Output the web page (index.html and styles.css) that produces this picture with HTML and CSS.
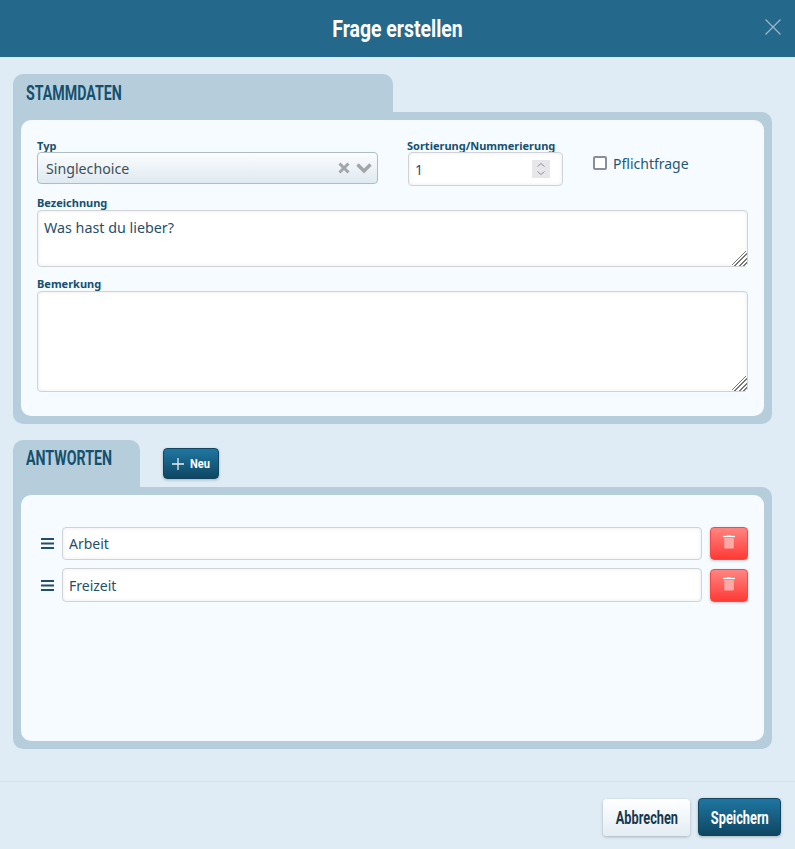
FILE: index.html
```html
<!DOCTYPE html>
<html lang="de">
<head>
<meta charset="utf-8">
<title>Frage erstellen</title>
<link rel="stylesheet" href="styles.css">
</head>
<body>
<div class="modal">
  <header class="modal-header">
    <h1 class="modal-title">Frage erstellen</h1>
    <button class="close" aria-label="Schließen">
      <svg width="16" height="16" viewBox="0 0 16 16"><path d="M.5.5l15 15M15.5.5l-15 15" stroke="#9db9c9" stroke-width="1.2" fill="none"/></svg>
    </button>
  </header>
  <main class="modal-body">
    <section class="section section-master">
      <div class="tab-row">
        <h2 class="tab tab-master"><span class="tab-text">STAMMDATEN</span></h2>
      </div>
      <div class="panel">
        <div class="card card-master">
          <div class="top-row">
            <div class="field field-type">
              <label class="label">Typ</label>
              <div class="select">
                <span class="select-value">Singlechoice</span>
                <svg class="select-x" width="12" height="12" viewBox="0 0 12 12"><path d="M1.500 1.500l9 9M10.500 1.500l-9 9" stroke="#a3a6a9" stroke-width="3" fill="none"/></svg>
                <svg class="select-chevron" width="16" height="12" viewBox="0 0 16 12"><path d="M1.500 2.500L8 9l6.500-6.500" stroke="#a3a6a9" stroke-width="3.400" fill="none"/></svg>
              </div>
            </div>
            <div class="field field-order">
              <label class="label">Sortierung/Nummerierung</label>
              <div class="number">
                <input class="number-input" type="text" value="1">
                <span class="spinner">
                  <svg width="18" height="18" viewBox="0 0 18 18"><path d="M5.500 6.500L9 3.500l3.500 3M5.500 11.500L9 14.500l3.500-3" stroke="#8d9197" stroke-width="1" fill="none"/></svg>
                </span>
              </div>
            </div>
            <label class="check"><span class="check-box"></span><span class="check-text">Pflichtfrage</span></label>
          </div>
          <div class="field field-name">
            <label class="label">Bezeichnung</label>
            <textarea class="area area-name">Was hast du lieber?</textarea>
          </div>
          <div class="field field-note">
            <label class="label">Bemerkung</label>
            <textarea class="area area-note"></textarea>
          </div>
        </div>
      </div>
    </section>

    <section class="section section-answers">
      <div class="tab-row">
        <h2 class="tab tab-answers"><span class="tab-text">ANTWORTEN</span></h2>
        <button class="btn-new">
          <svg width="12" height="12" viewBox="0 0 12 12"><path d="M6 0v12M0 6h12" stroke="#e6eff4" stroke-width="1.300" fill="none"/></svg>
          <span class="new-text">Neu</span>
        </button>
      </div>
      <div class="panel">
        <div class="card card-answers">
          <div class="answer answer-first">
            <svg class="handle" width="13" height="11" viewBox="0 0 13 11"><path d="M0 1h13M0 5.500h13M0 10h13" stroke="#1f4f6b" stroke-width="2" fill="none"/></svg>
            <input class="answer-input" type="text" value="Arbeit">
            <button class="btn-delete" aria-label="Löschen">
              <svg width="12" height="14" viewBox="0 0 12 14"><path d="M0 1.500h12" stroke="#fff" stroke-width="1.300"/><path d="M4 1V.3h4V1" fill="#fff"/><path d="M1.200 3h9.600v9.500a1 1 0 0 1-1 1H2.200a1 1 0 0 1-1-1z" fill="#ffa9a7"/></svg>
            </button>
          </div>
          <div class="answer answer-second">
            <svg class="handle" width="13" height="11" viewBox="0 0 13 11"><path d="M0 1h13M0 5.500h13M0 10h13" stroke="#1f4f6b" stroke-width="2" fill="none"/></svg>
            <input class="answer-input" type="text" value="Freizeit">
            <button class="btn-delete" aria-label="Löschen">
              <svg width="12" height="14" viewBox="0 0 12 14"><path d="M0 1.500h12" stroke="#fff" stroke-width="1.300"/><path d="M4 1V.3h4V1" fill="#fff"/><path d="M1.200 3h9.600v9.500a1 1 0 0 1-1 1H2.200a1 1 0 0 1-1-1z" fill="#ffa9a7"/></svg>
            </button>
          </div>
        </div>
      </div>
    </section>
  </main>
  <footer class="modal-footer">
    <button class="btn btn-cancel"><span class="btn-text">Abbrechen</span></button>
    <button class="btn btn-save"><span class="btn-text">Speichern</span></button>
  </footer>
</div>
</body>
</html>
```
FILE: styles.css
```css
* { box-sizing: border-box; }
html, body { margin: 0; padding: 0; height: 100%; }
body {
  background: #dfecf5;
  font-family: "Noto Sans", "Open Sans", sans-serif;
  color: #1f4f6b;
  overflow: hidden;
}
.modal { width: 795px; height: 849px; display: flex; flex-direction: column; }
.modal-header {
  height: 57px;
  background: #24688b;
  position: relative;
  display: flex;
  align-items: center;
  justify-content: center;
}
.modal-title {
  margin: 0;
  font-family: Roboto, sans-serif;
  font-size: 24px;
  font-weight: 700;
  color: #fff;
  transform: scaleX(.81);
  white-space: nowrap;
}
.close {
  position: absolute;
  right: 14px;
  top: 19px;
  width: 16px;
  height: 16px;
  padding: 0;
  border: 0;
  background: none;
  display: block;
}
.close svg { display: block; }
.modal-body { height: 724px; padding: 17px 23px 0 13px; }
.section-answers { margin-top: 16px; }
.tab-row { display: flex; align-items: flex-start; }
.tab {
  margin: 0;
  background: #b6cedb;
  border-radius: 10px 10px 0 0;
  padding: 7px 13px 0;
  font-family: Roboto, sans-serif;
  font-size: 20px;
  line-height: 24px;
  font-weight: 700;
  color: #15506f;
}
.tab-text { display: inline-block; transform: scaleX(.71); transform-origin: left center; white-space: nowrap; }
.tab-master { width: 380px; height: 38px; }
.tab-answers { width: 127px; height: 47px; padding-top: 6px; }
.panel {
  background: #b6cedb;
  border-radius: 0 10px 10px 10px;
  padding: 8px;
}
.card { background: #f6fbff; border-radius: 10px; }
.card-master { height: 296px; padding: 19px 16px 0; }
.card-answers { height: 246px; padding: 32px 16px 0 20px; }
.top-row { display: flex; align-items: flex-start; height: 47px; }
.field { display: flex; flex-direction: column; }
.field-type { width: 341px; }
.field-order { width: 155px; margin-left: 30px; }
.label {
  font-size: 11px;
  line-height: 13px;
  font-weight: 700;
  color: #15506f;
}
.field-order .label { margin-left: -1px; }
.field-order .number { margin-top: 0; }
.select {
  height: 32px;
  border: 1px solid #b0bcc4;
  border-radius: 4px;
  background: linear-gradient(#fbfdfe, #dfe9f0);
  display: flex;
  align-items: center;
  padding: 0 5px 0 8px;
}
.select-value { flex: 1; font-size: 14.2px; color: #3d4f5c; }
.select-chevron { margin-left: 6px; }
.number { position: relative; height: 34px; }
.number-input, .answer-input {
  width: 100%;
  height: 100%;
  border: 1px solid #cfd3d8;
  border-radius: 4px;
  background: #fff;
  box-shadow: inset 0 0 4px rgba(0, 0, 0, .08);
  font-family: inherit;
  font-size: 14px;
  color: #1f4f6b;
  outline: none;
  padding: 1px 6px;
}
.spinner {
  position: absolute;
  right: 13px;
  top: 8px;
  width: 18px;
  height: 18px;
  background: #e6e6eb;
  display: block;
}
.spinner svg { display: block; }
.check { display: flex; align-items: center; margin: 14px 0 0 30px; height: 20px; }
.check-box {
  width: 14px;
  height: 14px;
  border: 2px solid #8a8d9c;
  border-radius: 2px;
  background: #fff;
}
.check-text { margin-left: 6px; font-size: 14px; color: #1f5878; }
.field-name { margin-top: 10px; }
.field-note { margin-top: 10px; }
.field-name .label, .field-note .label { margin-bottom: 1px; }
.area {
  display: block;
  width: 100%;
  border: 1px solid #cfd3d8;
  border-radius: 4px;
  background: #fff;
  box-shadow: inset 0 0 4px rgba(0, 0, 0, .08);
  font-family: inherit;
  font-size: 14.3px;
  line-height: 19px;
  color: #1f4f6b;
  outline: none;
  padding: 7px 6px 6px;
  margin: 0;
}
.area::-webkit-resizer {
  background:
    linear-gradient(135deg, #fff 45%, transparent 45%),
    repeating-linear-gradient(135deg, #777 0 1.3px, #fff 1.3px 3px);
}
.area-name { height: 57px; }
.area-note { height: 101px; }
.btn-new {
  margin: 8px 0 0 23px;
  width: 56px;
  height: 31px;
  border: 1px solid #124560;
  border-radius: 4px;
  background: linear-gradient(#1f76a1, #0f4662);
  box-shadow: 0 1px 3px rgba(0, 0, 0, .25);
  color: #fff;
  font-family: Roboto, sans-serif;
  font-size: 13px;
  font-weight: 700;
  display: flex;
  align-items: center;
  gap: 6px;
  padding: 0 0 0 8px;
}
.new-text { display: inline-block; transform: scaleX(.85); transform-origin: left center; white-space: nowrap; }
.answer { display: flex; align-items: center; }
.answer-first { height: 33px; }
.answer-second { height: 34px; margin-top: 8px; }
.handle { flex: none; margin-right: 8px; }
.answer-input { flex: 1; min-width: 0; }
.btn-delete {
  flex: none;
  width: 38px;
  height: 33px;
  margin-left: 8px;
  border: 1px solid #f24a44;
  border-radius: 4px;
  background: linear-gradient(#ff8582, #ff3a35);
  box-shadow: 0 1px 3px rgba(0, 0, 0, .2);
  display: flex;
  align-items: flex-start;
  justify-content: center;
  padding: 7px 0 0;
}
.modal-footer {
  height: 68px;
  border-top: 1px solid #d5e0e8;
  display: flex;
  align-items: flex-start;
  justify-content: flex-end;
  padding: 16px 14px 0 0;
}
.btn {
  height: 38px;
  border-radius: 4px;
  font-family: Roboto, sans-serif;
  font-size: 18px;
  font-weight: 700;
  padding: 0;
}
.btn-text { display: inline-block; transform: scaleX(.71); white-space: nowrap; }
.btn-cancel {
  width: 87px;
  margin-top: 1px;
  height: 37px;
  border: 0;
  background: linear-gradient(#fff, #e3edf4);
  color: #17384d;
  box-shadow: 0 1px 3px rgba(0, 0, 0, .25);
}
.btn-save {
  width: 83px;
  margin-left: 8px;
  border: 1px solid #124560;
  background: linear-gradient(#1f76a1, #0f4662);
  color: #fff;
  box-shadow: 0 1px 3px rgba(0, 0, 0, .25);
}
```
